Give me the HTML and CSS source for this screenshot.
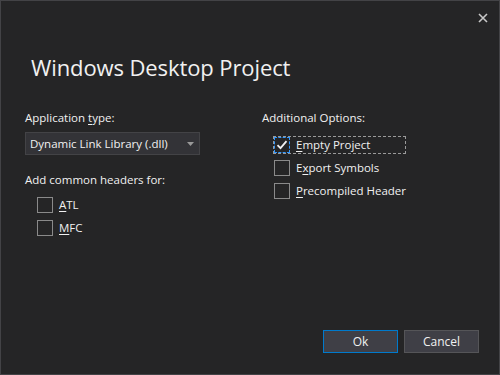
FILE: index.html
```html
<!DOCTYPE html>
<html lang="en">
<head>
  <meta charset="UTF-8">
  <title>Windows Desktop Project</title>
  <link rel="stylesheet" href="styles.css">
</head>
<body>

<div id="dialog">
  <div class="title-bar">
    <button class="close-button" aria-label="Close">
      <svg width="10" height="10" viewBox="0 0 10 10"><path d="M1 1L9 9M9 1L1 9" stroke="#c8c8c8" stroke-width="1.6"/></svg>
    </button>
  </div>

  <h1 class="dialog-title">Windows Desktop Project</h1>

  <div class="columns">
    <div class="column">
      <div class="field-label">Application <u>t</u>ype:</div>
      <div class="combo">
        <span>Dynamic Link Library (.dll)</span>
        <svg class="combo-arrow" width="7" height="4" viewBox="0 0 7 4"><path d="M0 0H7L3.5 4Z" fill="#999"/></svg>
      </div>

      <div class="field-label headers-label">Add common headers for:</div>
      <div class="check-list">
        <label class="check-row"><span class="check-box"></span><span><u>A</u>TL</span></label>
        <label class="check-row"><span class="check-box"></span><span><u>M</u>FC</span></label>
      </div>
    </div>

    <div class="column">
      <div class="field-label">Additional Options:</div>
      <div class="check-list options">
        <label class="check-row focused">
          <span class="check-box checked">
            <svg width="12" height="10" viewBox="0 0 12 10"><path d="M1.5 5.2L4.5 8.2L10.5 1.2" stroke="#f1f1f1" stroke-width="1.8" fill="none"/></svg>
          </span>
          <span><u>E</u>mpty Project</span>
        </label>
        <label class="check-row"><span class="check-box"></span><span>E<u>x</u>port Symbols</span></label>
        <label class="check-row"><span class="check-box"></span><span><u>P</u>recompiled Header</span></label>
      </div>
    </div>
  </div>

  <div class="footer">
    <button class="dialog-button default">Ok</button>
    <button class="dialog-button">Cancel</button>
  </div>
</div>

</body>
</html>
```

FILE: styles.css
```css
body { margin: 0; background-color: #252526; font-family: "Open Sans", "Noto Sans", sans-serif; color: #f1f1f1; }
#dialog {
  width: 500px; height: 375px; box-sizing: border-box;
  border: 1px solid #434346; background-color: #252526;
  display: flex; flex-direction: column;
}
.title-bar { display: flex; justify-content: flex-end; padding: 12px 11px 0 0; }
.close-button {
  background: none; border: none; padding: 0; margin: 0;
  width: 10px; height: 10px; display: flex; cursor: pointer;
}
.dialog-title {
  margin: 29px 0 0 30px; font-size: 22px; font-weight: 400;
  line-height: 30px; color: #f1f1f1; letter-spacing: -0.1px;
}
.columns {
  display: grid; grid-template-columns: 237px 1fr;
  padding: 28px 0 0 24px; flex: 1;
}
.field-label { font-size: 11.5px; line-height: 16px; }
.combo {
  margin-top: 6px; width: 175px; height: 23px; box-sizing: border-box;
  border: 1px solid #434346; background-color: #333337;
  display: flex; align-items: center; justify-content: space-between;
  padding: 0 5px 0 4px; font-size: 11.5px;
}
.combo-arrow { margin-top: 1px; }
.headers-label { margin-top: 17px; }
.check-list { display: flex; flex-direction: column; gap: 7px; margin: 9px 0 0 12px; }
.check-list.options { margin-top: 11px; }
.check-row {
  display: flex; align-items: center; gap: 6px;
  font-size: 11.5px; line-height: 16px; height: 16px; box-sizing: border-box;
  align-self: flex-start; cursor: pointer;
}
.check-row.focused { outline: 1px dashed #9a9a9a; outline-offset: 0; width: 131px; }
.check-box {
  width: 16px; height: 16px; box-sizing: border-box;
  border: 1px solid #8a8a8a; background-color: #252526;
  display: flex; align-items: center; justify-content: center;
}
.check-box.checked { border: 1px dashed #3399ff; }
.footer { display: flex; justify-content: flex-end; gap: 6px; padding: 0 20px 21px 0; }
.dialog-button {
  width: 75px; height: 23px; box-sizing: border-box;
  border: 1px solid #555558; background-color: #3f3f46; color: #f1f1f1;
  font-family: "Open Sans", "Noto Sans", sans-serif; font-size: 12px; padding: 0;
}
.dialog-button.default { border-color: #007acc; }
u { text-decoration-thickness: 1px; text-underline-offset: 2px; }
```
